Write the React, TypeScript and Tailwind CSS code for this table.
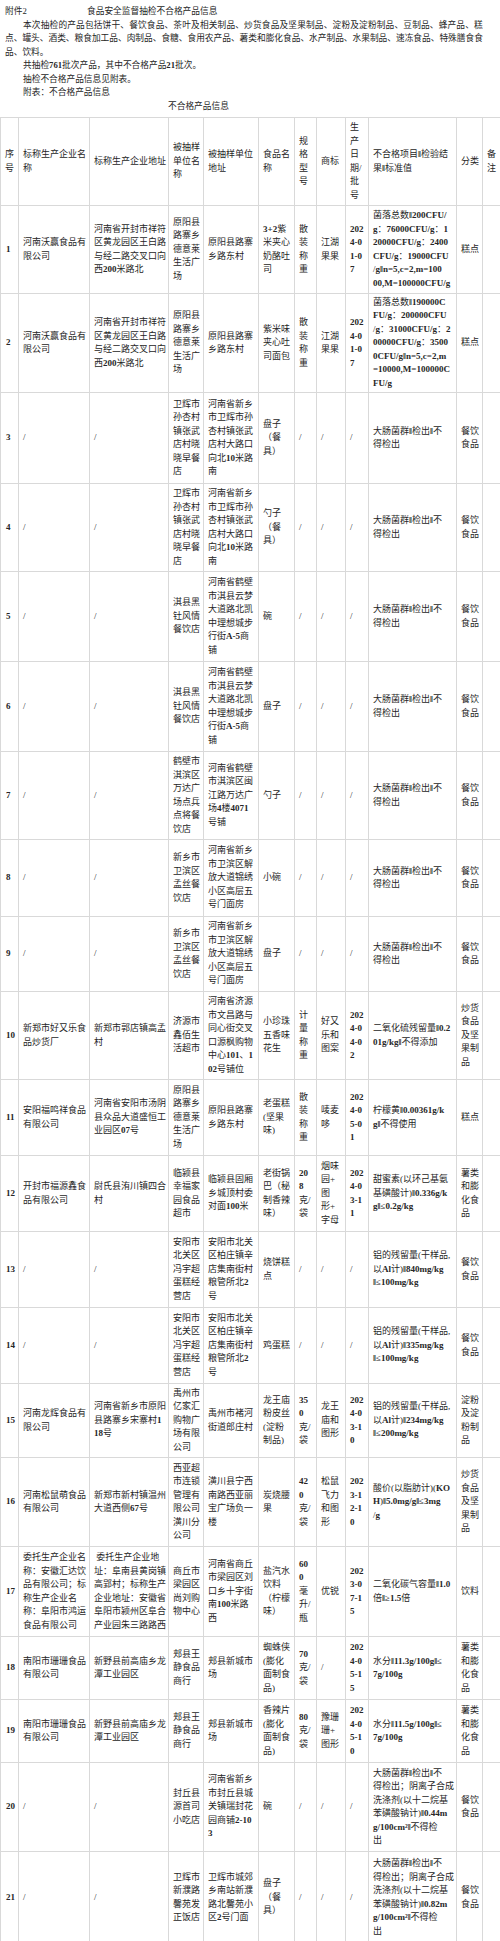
import React from 'react';

type Row = {
  h: string;
  cells: string[][];
};

const cols = [
  'w-[18px]',
  'w-[71px]',
  'w-[79px]',
  'w-[35px]',
  'w-[55px]',
  'w-[36px]',
  'w-[22px]',
  'w-[29px]',
  'w-[23px]',
  'w-[88px]',
  'w-[26px]',
  'w-[30px]',
];

const header: string[][] = [
  ['序', '号'],
  ['标称生产企业名', '称'],
  ['标称生产企业地址'],
  ['被抽样', '单位名', '称'],
  ['被抽样单位', '地址'],
  ['食品名', '称'],
  ['规', '格', '型', '号'],
  ['商标'],
  ['生', '产', '日', '期/', '批', '号'],
  ['不合格项目‖检验结', '果‖标准值'],
  ['分类'],
  ['备', '注'],
];

const none = ['/'];
const canyin = ['餐饮', '食品'];
const dachang = ['大肠菌群‖检出‖不', '得检出'];
const shupian = ['薯类', '和膨', '化食', '品'];
const chaohuo = ['炒货', '食品', '及坚', '果制', '品'];

const woying = ['河南沃赢食品有', '限公司'];
const woyingAddr = ['河南省开封市祥符', '区黄龙园区王白路', '与经二路交叉口向', '西200米路北'];
const deyilai = ['原阳县', '路寨乡', '德意莱', '生活广', '场'];
const luzhai = ['原阳县路寨', '乡路东村'];
const sanzhuang = ['散', '装', '称', '重'];
const weihui = ['卫辉市', '孙杏村', '镇张武', '店村晓', '晓早餐', '店'];
const weihuiAddr = ['河南省新乡', '市卫辉市孙', '杏村镇张武', '店村大路口', '向北10米路', '南'];
const qixian = ['淇县黑', '钍风情', '餐饮店'];
const qixianAddr = ['河南省鹤壁', '市淇县云梦', '大道路北凯', '中理想城步', '行街A-5商', '铺'];
const mengsi = ['新乡市', '卫滨区', '孟丝餐', '饮店'];
const mengsiAddr = ['河南省新乡', '市卫滨区解', '放大道锦绣', '小区高层五', '号门面房'];
const fengyu = ['安阳市', '北关区', '冯宇超', '蛋糕经', '营店'];
const fengyuAddr = ['安阳市北关', '区柏庄镇辛', '店集南街村', '粮管所北2', '号'];
const shanshan = ['南阳市珊珊食品', '有限公司'];
const shanshanAddr = ['新野县前高庙乡龙', '潭工业园区'];
const wangjing = ['郏县王', '静食品', '商行'];
const wangjingAddr = ['郏县新城市', '场'];

const rows: Row[] = [
  {
    h: 'h-[88px]',
    cells: [
      ['1'], woying, woyingAddr, deyilai, luzhai,
      ['3+2紫', '米夹心', '奶酪吐', '司'], sanzhuang, ['江湖', '果果'], ['202', '4-0', '1-0', '7'],
      ['菌落总数‖200CFU/', 'g：76000CFU/g：1', '20000CFU/g：2400', 'CFU/g：19000CFU', '/g‖n=5,c=2,m=100', '00,M=100000CFU/g'],
      ['糕点'], [],
    ],
  },
  {
    h: 'h-[99px]',
    cells: [
      ['2'], woying, woyingAddr, deyilai, luzhai,
      ['紫米味', '夹心吐', '司面包'], sanzhuang, ['江湖', '果果'], ['202', '4-0', '1-0', '7'],
      ['菌落总数‖190000C', 'FU/g：200000CFU', '/g：31000CFU/g：2', '00000CFU/g：3500', '0CFU/g‖n=5,c=2,m', '=10000,M=100000C', 'FU/g'],
      ['糕点'], [],
    ],
  },
  {
    h: 'h-[91px]',
    cells: [['3'], none, none, weihui, weihuiAddr, ['盘子', '（餐', '具）'], none, none, none, dachang, canyin, []],
  },
  {
    h: 'h-[88px]',
    cells: [['4'], none, none, weihui, weihuiAddr, ['勺子', '（餐', '具）'], none, none, none, dachang, canyin, []],
  },
  {
    h: 'h-[90px]',
    cells: [['5'], none, none, qixian, qixianAddr, ['碗'], none, none, none, dachang, canyin, []],
  },
  {
    h: 'h-[90px]',
    cells: [['6'], none, none, qixian, qixianAddr, ['盘子'], none, none, none, dachang, canyin, []],
  },
  {
    h: 'h-[88px]',
    cells: [
      ['7'], none, none,
      ['鹤壁市', '淇滨区', '万达广', '场点兵', '点将餐', '饮店'],
      ['河南省鹤壁', '市淇滨区闽', '江路万达广', '场4楼4071', '号铺'],
      ['勺子'], none, none, none, dachang, canyin, [],
    ],
  },
  {
    h: 'h-[77px]',
    cells: [['8'], none, none, mengsi, mengsiAddr, ['小碗'], none, none, none, dachang, canyin, []],
  },
  {
    h: 'h-[75px]',
    cells: [['9'], none, none, mengsi, mengsiAddr, ['盘子'], none, none, none, dachang, canyin, []],
  },
  {
    h: 'h-[88px]',
    cells: [
      ['10'], ['新郑市好又乐食', '品炒货厂'], ['新郑市郭店镇高孟', '村'],
      ['济源市', '鑫佰生', '活超市'],
      ['河南省济源', '市文昌路与', '同心街交叉', '口源枫购物', '中心101、1', '02号铺位'],
      ['小珍珠', '五香味', '花生'], ['计', '量', '称', '重'], ['好又', '乐和', '图案'], ['202', '4-0', '4-0', '2'],
      ['二氧化硫残留量‖0.2', '01g/kg‖不得添加'], chaohuo, [],
    ],
  },
  {
    h: 'h-[76px]',
    cells: [
      ['11'], ['安阳福鸣祥食品', '有限公司'], ['河南省安阳市汤阴', '县众品大道盛恒工', '业园区07号'],
      deyilai, luzhai, ['老蛋糕', '(坚果', '味)'], sanzhuang, ['唛麦', '哆'], ['202', '4-0', '5-0', '1'],
      ['柠檬黄‖0.00361g/k', 'g‖不得使用'], ['糕点'], [],
    ],
  },
  {
    h: 'h-[76px]',
    cells: [
      ['12'], ['开封市福源鑫食', '品有限公司'], ['尉氏县洧川镇四合', '村'],
      ['临颍县', '幸福家', '园食品', '超市'], ['临颍县固厢', '乡城顶村委', '对面100米'],
      ['老街锅', '巴（秘', '制香辣', '味）'], ['20', '8', '克/', '袋'], ['烟味', '园+', '图', '形+', '字母'],
      ['202', '4-0', '3-1', '1'],
      ['甜蜜素(以环己基氨', '基磺酸计)‖0.336g/k', 'g‖≤0.2g/kg'], shupian, [],
    ],
  },
  {
    h: 'h-[76px]',
    cells: [
      ['13'], none, none, fengyu, fengyuAddr, ['烧饼糕', '点'], none, none, none,
      ['铝的残留量(干样品,', '以Al计)‖840mg/kg', '‖≤100mg/kg'], canyin, [],
    ],
  },
  {
    h: 'h-[76px]',
    cells: [
      ['14'], none, none, fengyu, fengyuAddr, ['鸡蛋糕'], none, none, none,
      ['铝的残留量(干样品,', '以Al计)‖335mg/kg', '‖≤100mg/kg'], canyin, [],
    ],
  },
  {
    h: 'h-[74px]',
    cells: [
      ['15'], ['河南龙辉食品有', '限公司'], ['河南省新乡市原阳', '县路寨乡宋寨村1', '18号'],
      ['禹州市', '亿家汇', '购物广', '场有限', '公司'], ['禹州市褚河', '街道郎庄村'],
      ['龙王庙', '粉皮丝', '(淀粉', '制品)'], ['35', '0', '克/', '袋'], ['龙王', '庙和', '图形'],
      ['202', '4-0', '3-1', '0'],
      ['铝的残留量(干样品,', '以Al计)‖234mg/kg', '‖≤200mg/kg'], ['淀粉', '及淀', '粉制', '品'], [],
    ],
  },
  {
    h: 'h-[89px]',
    cells: [
      ['16'], ['河南松鼠萌食品', '有限公司'], ['新郑市新村镇温州', '大道西侧67号'],
      ['西亚超', '市连锁', '管理有', '限公司', '潢川分', '公司'], ['潢川县宁西', '南路西亚丽', '宝广场负一', '楼'],
      ['炭烧腰', '果'], ['42', '0', '克/', '袋'], ['松鼠', '飞力', '和图', '形'], ['202', '3-1', '2-1', '0'],
      ['酸价(以脂肪计)(KO', 'H)‖5.0mg/g‖≤3mg', '/g'], chaohuo, [],
    ],
  },
  {
    h: 'h-[90px]',
    cells: [
      ['17'],
      ['委托生产企业名', '称：安徽汇达饮', '品有限公司；标', '称生产企业名', '称：阜阳市鸿运', '食品有限公司'],
      ['\u00a0委托生产企业地', '址：阜南县黄岗镇', '高郢村；标称生产', '企业地址：安徽省', '阜阳市颍州区阜合', '产业园朱三路路西'],
      ['商丘市', '梁园区', '尚刘购', '物中心'], ['河南省商丘', '市梁园区刘', '口乡十字街', '南100米路', '西'],
      ['盐汽水', '饮料', '（柠檬', '味）'], ['60', '0', '毫', '升/', '瓶'], ['优锐'], ['202', '3-0', '7-1', '5'],
      ['二氧化碳气容量‖1.0', '倍‖≥1.5倍'], ['饮料'], [],
    ],
  },
  {
    h: 'h-[63px]',
    cells: [
      ['18'], shanshan, shanshanAddr, wangjing, wangjingAddr,
      ['蜘蛛侠', '(膨化', '面制食', '品)'], ['70', '克/', '袋'], none, ['202', '4-0', '5-1', '5'],
      ['水分‖11.3g/100g‖≤', '7g/100g'], shupian, [],
    ],
  },
  {
    h: 'h-[63px]',
    cells: [
      ['19'], shanshan, shanshanAddr, wangjing, wangjingAddr,
      ['香辣片', '(膨化', '面制食', '品)'], ['80', '克/', '袋'], ['豫珊', '珊+', '图形'], ['202', '4-0', '5-1', '0'],
      ['水分‖11.5g/100g‖≤', '7g/100g'], shupian, [],
    ],
  },
  {
    h: 'h-[89px]',
    cells: [
      ['20'], none, none, ['封丘县', '源首司', '小吃店'],
      ['河南省新乡', '市封丘县城', '关镇瑞封花', '园商铺2-10', '3'],
      ['碗'], none, none, none,
      ['大肠菌群‖检出‖不', '得检出；阴离子合成', '洗涤剂(以十二烷基', '苯磺酸钠计)‖0.44m', 'g/100cm²‖不得检', '出'],
      canyin, [],
    ],
  },
  {
    h: 'h-[92px]',
    cells: [
      ['21'], none, none, ['卫辉市', '新濮路', '馨苑发', '正饭店'],
      ['卫辉市城郊', '乡南站新濮', '路北馨苑小', '区2号门面'],
      ['盘子', '（餐', '具）'], none, none, none,
      ['大肠菌群‖检出‖不', '得检出；阴离子合成', '洗涤剂(以十二烷基', '苯磺酸钠计)‖0.82m', 'g/100cm²‖不得检', '出'],
      canyin, [],
    ],
  },
];

// latin runs and digits print bold in the source document
function rich(s: string) {
  const parts = s.split(/([0-9A-Za-z‖][0-9A-Za-z.,=+\-\/:%²‖]*)/);
  return parts.map((p, i) =>
    i % 2 === 1 ? (
      <b key={i} className="font-bold">
        {p}
      </b>
    ) : (
      p
    )
  );
}

function Lines({ lines }: { lines: string[] }) {
  return (
    <>
      {lines.map((l, i) => (
        <div key={i}>{rich(l)}</div>
      ))}
    </>
  );
}

// one printed line spread across the given width, the way Word justifies it
function Spread({ text, className }: { text: string; className?: string }) {
  return (
    <div className={`flex justify-between whitespace-nowrap ${className ?? ''}`}>
      {Array.from(text).map((ch, i) => (
        <span key={i}>{ch}</span>
      ))}
    </div>
  );
}

export default function App() {
  return (
    <div className="w-[500px] overflow-hidden bg-white text-[#262626] font-['Liberation_Serif','Noto_Sans_CJK_SC',serif] text-[9px] leading-[13.5px]">
      <div className="px-[5px] pt-[5px] pb-[4px] text-[8.7px]">
        <div className="flex">
          <span className="w-[82px]">附件2</span>
          <span>食品安全监督抽检不合格产品信息</span>
        </div>
        <Spread className="ml-[18px] w-[460px]" text="本次抽检的产品包括饼干、餐饮食品、茶叶及相关制品、炒货食品及坚果制品、淀粉及淀粉制品、豆制品、蜂产品、糕" />
        <Spread className="w-[478px]" text="点、罐头、酒类、粮食加工品、肉制品、食糖、食用农产品、薯类和膨化食品、水产制品、水果制品、速冻食品、特殊膳食食" />
        <div>品、饮料。</div>
        <div className="pl-[18px]">{rich('共抽检761批次产品，其中不合格产品21批次。')}</div>
        <div className="pl-[18px]">抽检不合格产品信息见附表。</div>
        <div className="pl-[18px]">附表：不合格产品信息</div>
        <div className="pl-[163px]">不合格产品信息</div>
      </div>

      <table className="table-fixed border-collapse w-[512px]">
        <colgroup>
          {cols.map((c, i) => (
            <col key={i} className={c} />
          ))}
        </colgroup>
        <thead>
          <tr className="h-[88px]">
            {header.map((lines, i) => (
              <th key={i} className="border border-[#d9d9d9] px-1 text-left font-normal align-middle whitespace-nowrap">
                <Lines lines={lines} />
              </th>
            ))}
          </tr>
        </thead>
        <tbody>
          {rows.map((row, r) => (
            <tr key={r} className={row.h}>
              {row.cells.map((lines, i) => (
                <td
                  key={i}
                  className={`border border-[#d9d9d9] align-middle whitespace-nowrap ${i === 0 ? 'pl-[5px] pr-0' : 'px-1'}`}
                >
                  <Lines lines={lines} />
                </td>
              ))}
            </tr>
          ))}
        </tbody>
      </table>
    </div>
  );
}
